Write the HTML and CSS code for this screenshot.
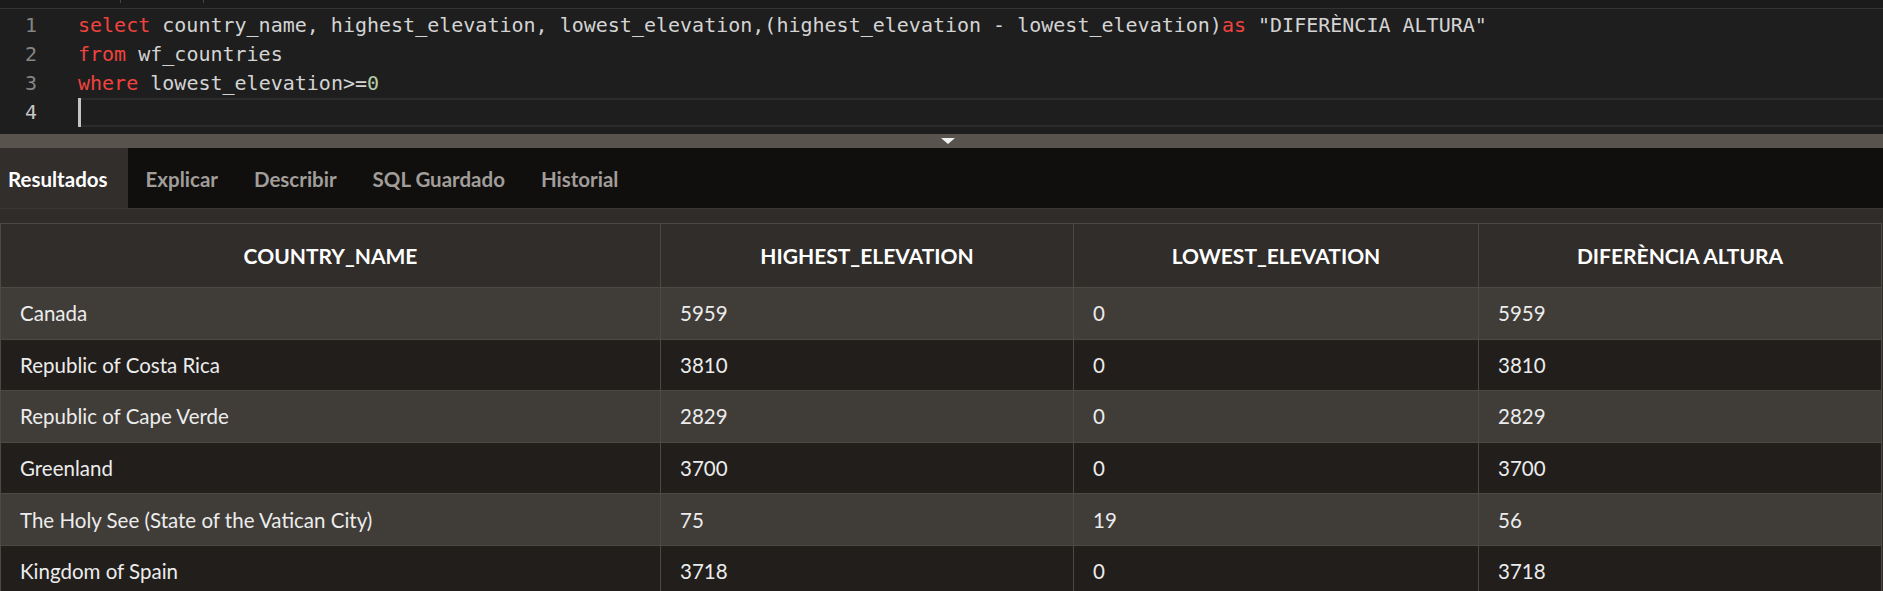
FILE: index.html
```html
<!DOCTYPE html>
<html lang="es">
<head>
<meta charset="utf-8">
<title>SQL Commands</title>
<link rel="stylesheet" href="styles.css">
</head>
<body>
<div class="app">
  <div class="topstrip">
    <span class="tick tick-a"></span>
    <span class="tick tick-b"></span>
  </div>
  <div class="editor">
    <div class="gutter">
      <div class="ln">1</div>
      <div class="ln">2</div>
      <div class="ln">3</div>
      <div class="ln ln-current">4</div>
    </div>
    <div class="code">
      <div class="line"><span class="kw">select</span> country_name, highest_elevation, lowest_elevation,(highest_elevation - lowest_elevation)<span class="kw">as</span> "DIFERÈNCIA ALTURA"</div>
      <div class="line"><span class="kw">from</span> wf_countries</div>
      <div class="line"><span class="kw">where</span> lowest_elevation&gt;=<span class="num">0</span></div>
      <div class="line line-current"><span class="cursor"></span></div>
    </div>
  </div>
  <div class="splitter"><span class="grip"></span></div>
  <div class="tabs">
    <div class="tab tab-active">Resultados</div>
    <div class="tab">Explicar</div>
    <div class="tab">Describir</div>
    <div class="tab">SQL Guardado</div>
    <div class="tab">Historial</div>
  </div>
  <div class="results">
    <div class="grid">
      <div class="th">COUNTRY_NAME</div>
      <div class="th">HIGHEST_ELEVATION</div>
      <div class="th">LOWEST_ELEVATION</div>
      <div class="th">DIFERÈNCIA ALTURA</div>

      <div class="td odd">Canada</div>
      <div class="td odd">5959</div>
      <div class="td odd">0</div>
      <div class="td odd">5959</div>

      <div class="td even">Republic of Costa Rica</div>
      <div class="td even">3810</div>
      <div class="td even">0</div>
      <div class="td even">3810</div>

      <div class="td odd">Republic of Cape Verde</div>
      <div class="td odd">2829</div>
      <div class="td odd">0</div>
      <div class="td odd">2829</div>

      <div class="td even">Greenland</div>
      <div class="td even">3700</div>
      <div class="td even">0</div>
      <div class="td even">3700</div>

      <div class="td odd">The Holy See (State of the Vatican City)</div>
      <div class="td odd">75</div>
      <div class="td odd">19</div>
      <div class="td odd">56</div>

      <div class="td even">Kingdom of Spain</div>
      <div class="td even">3718</div>
      <div class="td even">0</div>
      <div class="td even">3718</div>
    </div>
  </div>
</div>
</body>
</html>
```

FILE: styles.css
```css
* { box-sizing: border-box; }

html, body {
  margin: 0;
  padding: 0;
  background: #201d1b;
  overflow: hidden;
}

.app {
  width: 1883px;
  height: 591px;
  overflow: hidden;
  display: flex;
  flex-direction: column;
}

/* thin strip above the editor */
.topstrip {
  height: 9px;
  background: #1b1b1b;
  border-bottom: 1px solid #333333;
  display: flex;
  align-items: flex-start;
  flex-shrink: 0;
}
.tick {
  width: 1px;
  height: 3px;
  background: #444;
}
.tick-a { margin-left: 120px; }
.tick-b { margin-left: 82px; }

/* editor */
.editor {
  height: 125px;
  flex-shrink: 0;
  background: #1e1e1e;
  display: flex;
  padding-top: 2px;
  font-family: "DejaVu Sans Mono", "Liberation Mono", monospace;
  font-size: 20px;
}
.gutter {
  width: 37px;
  flex-shrink: 0;
  text-align: right;
  color: #858585;
}
.ln {
  height: 29px;
  line-height: 29px;
}
.ln-current { color: #c6c6c6; }

.code {
  flex: 1;
  margin-left: 41px;
  color: #d4d4d4;
}
.line {
  height: 29px;
  line-height: 29px;
  white-space: pre;
}
.line-current {
  border-top: 2px solid #2b2b2b;
  border-bottom: 2px solid #2b2b2b;
  display: flex;
}
.cursor {
  width: 3px;
  height: 29px;
  margin-top: -2px;
  background: #c4c4c4;
}
.kw { color: #f0433f; }
.num { color: #b5cea8; }

/* splitter */
.splitter {
  height: 14px;
  flex-shrink: 0;
  background: #58534c;
  display: flex;
  justify-content: center;
  align-items: flex-start;
  padding-top: 4px;
}
.grip {
  width: 0;
  height: 0;
  margin-left: 12px;
  border-left: 7px solid transparent;
  border-right: 7px solid transparent;
  border-top: 6px solid #f2f2f2;
}

/* tabs */
.tabs {
  height: 60px;
  flex-shrink: 0;
  background: #100f0e;
  display: flex;
  font-family: Lato, "Liberation Sans", sans-serif;
  font-weight: 700;
  font-size: 20.5px;
  color: #a19d99;
}
.tab {
  display: flex;
  align-items: center;
  padding: 2px 18px 0;
}
.tab-active {
  background: #312e2b;
  color: #ffffff;
  padding-left: 8px;
  padding-right: 20px;
}

/* results */
.results {
  flex: 1;
  background: #2f2c29;
  border-top: 1px solid #3a3733;
  padding-top: 14px;
  padding-right: 1px;
  font-family: Lato, "Liberation Sans", sans-serif;
  font-size: 20.5px;
}
.grid {
  display: grid;
  grid-template-columns: 660px 413px 405px 1fr;
  grid-template-rows: 64px;
  grid-auto-rows: 51.6px;
  border-top: 1px solid #4c4844;
  border-left: 1px solid #4c4844;
}
.th, .td {
  border-right: 1px solid #4c4844;
  border-bottom: 1px solid #4c4844;
  display: flex;
  align-items: center;
}
.th {
  background: #312d2a;
  color: #ffffff;
  font-weight: 700;
  font-size: 21px;
  justify-content: center;
}
.td {
  padding-left: 19px;
  color: #ececec;
}
.odd { background: #403c38; }
.even { background: #211e1c; }
```
